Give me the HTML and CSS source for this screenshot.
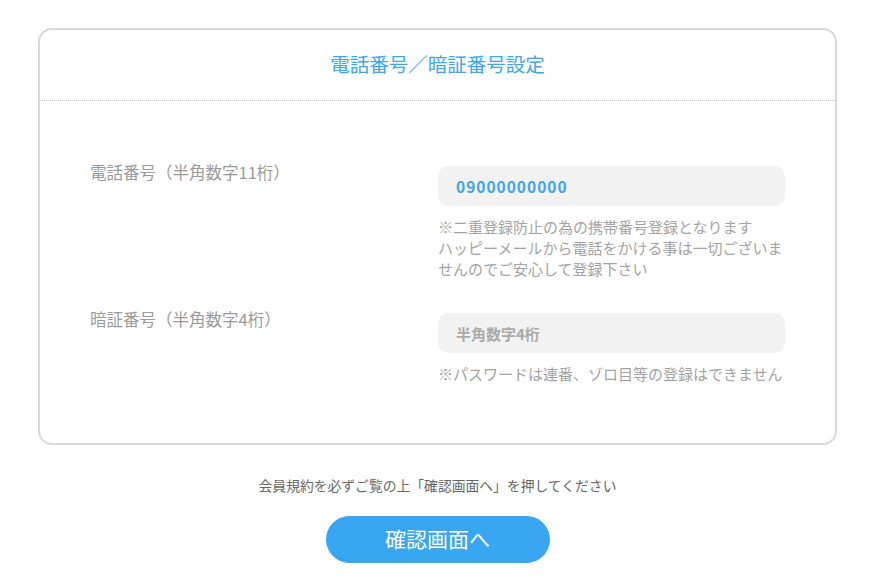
FILE: index.html
```html
<!DOCTYPE html>
<html lang="ja">
<head>
<meta charset="utf-8">
<title>電話番号／暗証番号設定</title>
<link rel="stylesheet" href="styles.css">
</head>
<body>
<div class="page">
  <section class="card">
    <header class="card-head">
      <h1 class="card-title">電話番号／暗証番号設定</h1>
    </header>
    <div class="card-body">
      <div class="row">
        <div class="label">電話番号（半角数字11桁）</div>
        <div class="field">
          <div class="input value">09000000000</div>
          <p class="note">※二重登録防止の為の携帯番号登録となります<br>ハッピーメールから電話をかける事は一切ございませんのでご安心して登録下さい</p>
        </div>
      </div>
      <div class="row">
        <div class="label">暗証番号（半角数字4桁）</div>
        <div class="field">
          <div class="input placeholder">半角数字4桁</div>
          <p class="note">※パスワードは連番、ゾロ目等の登録はできません</p>
        </div>
      </div>
    </div>
  </section>
  <p class="agree">会員規約を必ずご覧の上「確認画面へ」を押してください</p>
  <div class="actions">
    <button class="btn" type="button">確認画面へ</button>
  </div>
</div>
</body>
</html>
```

FILE: styles.css
```css
* { box-sizing: border-box; }
html, body { margin: 0; padding: 0; background: #fff; }
body {
  font-family: "Noto Sans CJK JP", "Noto Sans", sans-serif;
  color: #999;
}
.page {
  width: 799px;
  margin: 28px 0 0 38px;
}
.card {
  border: 2px solid #d9d9d9;
  border-radius: 14px;
  background: #fff;
}
.card-head {
  height: 71px;
  display: flex;
  align-items: center;
  justify-content: center;
  border-bottom: 1px dotted #c4c4c4;
  padding-bottom: 2px;
}
.card-title {
  margin: 0;
  font-size: 19.5px;
  font-weight: 400;
  color: #3ea5ee;
  line-height: 1;
}
.card-body {
  padding: 60px 50px 59px;
  display: flex;
  flex-direction: column;
  gap: 29px;
}
.row {
  display: grid;
  grid-template-columns: 1fr 347px;
  align-items: start;
}
.label {
  font-size: 16.5px;
  line-height: 22px;
  color: #9a9a9a;
}
.field { padding-top: 5px; }
.input {
  height: 40px;
  border-radius: 10px;
  background: #f2f2f2;
  padding: 0 18px;
  display: flex;
  align-items: center;
  font-size: 15px;
  font-weight: 700;
}
.input.value {
  color: #3ea5ee;
  letter-spacing: 1px;
  font-size: 15.5px;
}
.input.placeholder { color: #aaa; }
.note {
  margin: 10px 0 0;
  font-size: 15px;
  line-height: 21px;
  color: #a3a3a3;
}
.agree {
  margin: 30px 0 0;
  text-align: center;
  font-size: 13.8px;
  line-height: 20px;
  color: #666;
}
.actions {
  display: flex;
  justify-content: center;
  margin-top: 21px;
}
.btn {
  width: 224px;
  height: 47px;
  border: 0;
  border-radius: 24px;
  background: #38a6f0;
  color: #fff;
  font-family: inherit;
  font-size: 21px;
  line-height: 1;
  padding: 0 0 2px;
  cursor: pointer;
}
```
